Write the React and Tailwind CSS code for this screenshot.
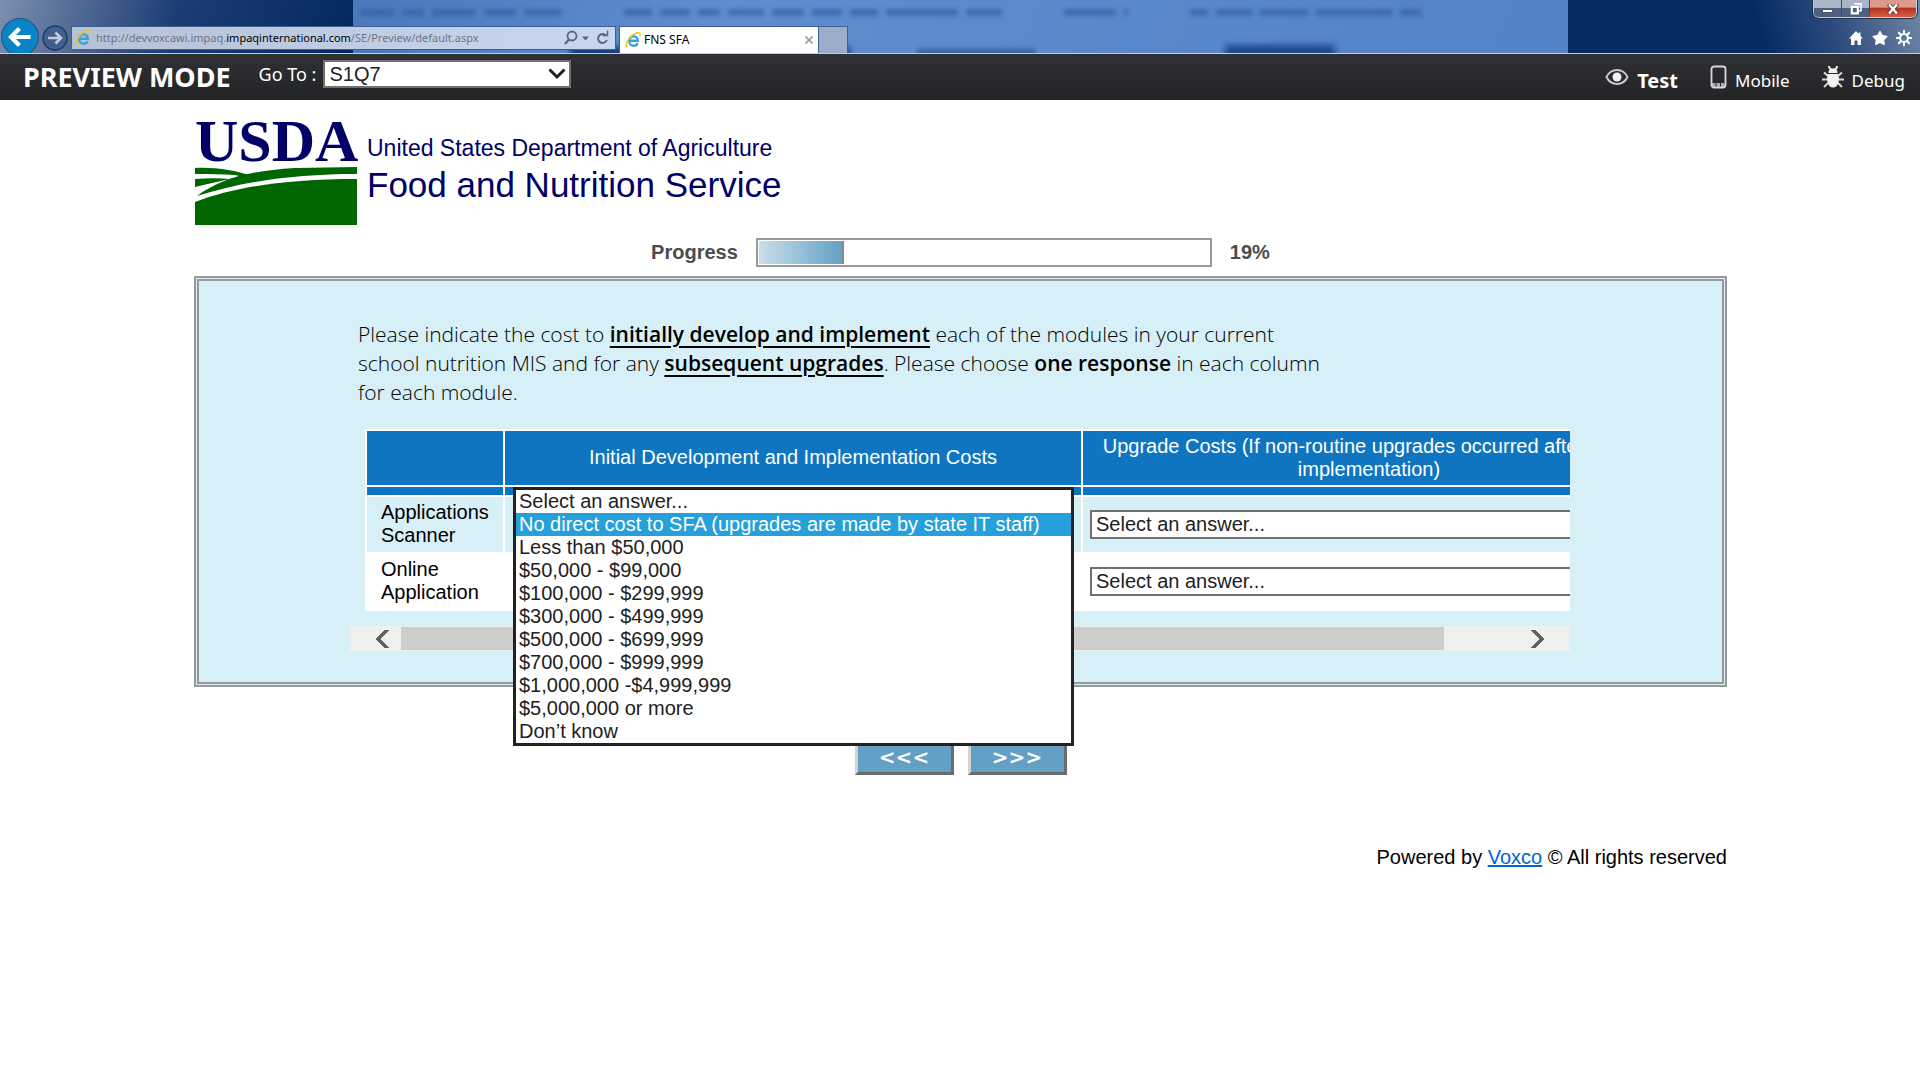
import React, { useState } from 'react';
import { FaStar } from 'react-icons/fa';

const COSTS = [
  'Select an answer...',
  'No direct cost to SFA (upgrades are made by state IT staff)',
  'Less than $50,000',
  '$50,000 - $99,000',
  '$100,000 - $299,999',
  '$300,000 - $499,999',
  '$500,000 - $699,999',
  '$700,000 - $999,999',
  '$1,000,000 -$4,999,999',
  '$5,000,000 or more',
  'Don’t know',
];

const MODULES = [
  { id: 'scanner', label: 'Applications Scanner' },
  { id: 'online', label: 'Online Application' },
];

// widths of the blurred words behind the title bar, one list per group
const BLURRED_WORDS = [
  [34, 22, 44, 32, 38],
  [28, 30, 22, 36, 32, 30, 28, 72, 36],
  [52, 4],
  [18, 36, 48, 76, 22],
];

const IeIcon = () => (
  <svg viewBox="0 0 16 16" className="h-4 w-4 shrink-0" fill="none" aria-hidden="true">
    <path d="M4.500 8.800h8.300C12.800 6 11 4.200 8.600 4.200S4.200 6.200 4.200 9s1.900 4.700 4.500 4.700c1.900 0 3.400-1 4-2.500" stroke="#3ba3dc" strokeWidth="2.400" />
    <path d="M2.300 15.200C.2 14.200 1.200 10.300 4.400 6.300 7.700 2.200 12.500-.3 14.500 1.100c.9.700.8 2 .2 3.300" stroke="#f2c21a" strokeWidth="1.400" />
  </svg>
);

const HomeIcon = () => (
  <svg viewBox="0 0 16 16" className="h-4 w-4" aria-hidden="true">
    <path d="M8 1L1 8.500h2V15h3.500v-4.500h3V15H13V8.500h2L12.500 6V2.500h-2V4z" fill="#fff" />
  </svg>
);

const GearIcon = () => (
  <svg viewBox="0 0 16 16" className="h-4 w-4" fill="none" stroke="#fff" aria-hidden="true">
    <circle cx="8" cy="8" r="4" strokeWidth="2.200" />
    <path d="M8 0v3.500M8 12.500V16M0 8h3.500M12.500 8H16M2.300 2.300l2.500 2.500M11.200 11.200l2.500 2.500M2.300 13.700l2.500-2.500M11.200 4.800l2.500-2.500" strokeWidth="2" />
  </svg>
);

const EyeIcon = () => (
  <svg viewBox="0 0 24 18" className="h-[18px] w-6" aria-hidden="true">
    <path d="M1.500 9C4 3.800 7.600 2 12 2s8 1.800 10.500 7C20 14.200 16.400 16 12 16S4 14.200 1.500 9z" fill="none" stroke="#c9c9c9" strokeWidth="2" />
    <circle cx="12" cy="9" r="4.500" fill="#f2f2f2" />
  </svg>
);

const PhoneIcon = () => (
  <svg viewBox="0 0 17 24" className="h-6 w-[17px]" aria-hidden="true">
    <rect x="1.500" y="1.500" width="14" height="21" rx="2.500" fill="none" stroke="#d8d8d8" strokeWidth="1.800" />
    <path d="M2 19h13M2 21h13" stroke="#d8d8d8" strokeWidth="1.500" strokeDasharray="3.500 1" />
  </svg>
);

const BugIcon = () => (
  <svg viewBox="0 0 22 24" className="h-6 w-[22px]" aria-hidden="true">
    <path d="M7 1c0 3 1.500 3.500 4 3.500S15 4 15 1" fill="none" stroke="#e8e8e8" strokeWidth="2" />
    <path d="M6.500 8C6.500 4.500 8 4 11 4s4.500.5 4.500 4z" fill="#f2f2f2" />
    <path d="M5.500 9h11c1.500 7-.5 13.500-5.500 13.500S4 16 5.500 9z" fill="#f2f2f2" />
    <path d="M6 11L2 7.500M5 14.500H0M6 18l-4 4M16 11l4-3.500M17 14.500h5M16 18l4 4" stroke="#d8d8d8" strokeWidth="2" />
  </svg>
);

/* Desktop content showing through the glass title bar */
const GlassBackdrop = () => (
  <div className="absolute inset-0 overflow-hidden bg-[#173c74]" aria-hidden="true">
    <div className="absolute inset-y-0 left-0 w-[360px] bg-linear-[105deg] from-[#7c8fb0] from-0% via-[#1c3d74] via-48% to-[#02275f]" />
    <div className="absolute inset-y-0 right-0 w-[360px] bg-linear-[75deg] from-[#042b64] from-55% via-[#2c4b7c] via-75% to-[#7187a4]" />
    <div className="absolute inset-y-0 left-[353px] right-[352px] bg-linear-[115deg] from-[#4a78bb] via-[#5f8dcf] via-30% to-[#5482c7]" />
    <div className="absolute left-[360px] top-[9px] flex h-[7px] gap-[62px] blur-[2px]">
      {BLURRED_WORDS.map((words, i) => (
        <div key={i} className="flex gap-2">
          {words.map((width, j) => (
            <span key={j} className="bg-[#2f5ba2]/60" style={{ width }} />
          ))}
        </div>
      ))}
    </div>
    <div className="absolute left-[570px] top-[47px] h-3 w-[280px] bg-[#143a74] blur-[3px]" />
    <div className="absolute left-[917px] top-[49px] h-2 w-[118px] bg-[#2f5288]/70 blur-[2px]" />
    <div className="absolute left-[1225px] top-[45px] h-4 w-[110px] bg-[#1d488c] blur-[3px]" />
  </div>
);

const BrowserChrome = () => (
  <div className="relative h-[54px] border-b border-[#b9cdec] font-['Noto_Sans']">
    <GlassBackdrop />
    <div className="relative flex h-[53px] items-end overflow-hidden">
      <button aria-label="Back" className="-mb-[3px] ml-px h-[38px] w-[38px] shrink-0">
        <svg viewBox="0 0 36 36" className="h-[38px] w-[38px]">
          <circle cx="18" cy="18" r="17.500" fill="#0a84c6" stroke="#26507f" />
          <path d="M28 18H10M17.500 10L9.500 18l8 8" fill="none" stroke="#fff" strokeWidth="4" />
        </svg>
      </button>
      <button aria-label="Forward" className="mb-[2px] ml-[3px] h-[26px] w-[26px] shrink-0">
        <svg viewBox="0 0 26 26" className="h-[26px] w-[26px]">
          <circle cx="13" cy="13" r="12" fill="#42608c" stroke="#1d3a68" strokeWidth="1.500" />
          <path d="M6 13h12M13.500 7.500L19 13l-5.500 5.500" fill="none" stroke="#c3cde0" strokeWidth="2.500" />
        </svg>
      </button>
      <div className="mb-[3px] ml-[3px] flex h-6 w-[545px] shrink-0 items-center border border-[#3d5f92] bg-linear-to-r from-[#b5c1d6] to-[#c8d7f0] pl-[3px] pr-1 text-[11px] text-[#6c7583]">
        <IeIcon />
        <span className="ml-[5px] flex-1 whitespace-nowrap">
          http://devvoxcawi.impaq.<span className="text-black">impaqinternational.com</span>/SE/Preview/default.aspx
        </span>
        <svg viewBox="0 0 48 18" className="h-[18px] w-12" fill="none" stroke="#5b6577" aria-hidden="true">
          <circle cx="9" cy="7" r="4.500" strokeWidth="1.800" />
          <path d="M6 10.500L2 15" strokeWidth="2.200" />
          <path d="M19 7.500h7l-3.500 4z" fill="#5b6577" stroke="none" />
          <path d="M43 6.500a4.500 4.500 0 1 0 .8 4.500" strokeWidth="2" />
          <path d="M39.500 6.500h5v-5" strokeWidth="1.500" />
        </svg>
      </div>
      <div className="ml-[3px] flex h-[27px] w-[200px] shrink-0 items-center border border-b-0 border-[#3d5f92] bg-white px-[5px] text-xs text-black">
        <IeIcon />
        <span className="ml-[3px] flex-1">FNS SFA</span>
        <button aria-label="Close tab" className="h-2 w-2">
          <svg viewBox="0 0 8 8" className="h-2 w-2"><path d="M.5.5l7 7M7.500.5l-7 7" stroke="#a0a0a0" strokeWidth="1.800" /></svg>
        </button>
      </div>
      <button aria-label="New tab" className="h-[27px] w-[29px] shrink-0 border border-b-0 border-l-0 border-[#3d5f92] bg-[#9dadc9]" />
      <div className="ml-auto flex h-full flex-col items-end justify-between pb-[7px]">
        <div className="mr-[3px] flex h-[18px] overflow-hidden rounded-b-md border border-t-0 border-[#e1e8f2]/80 outline outline-[#26344d]">
          <button aria-label="Minimize" className="flex w-7 items-center justify-center border-r border-[#3c4c66] bg-linear-to-b from-[#a8b5c8] from-45% to-[#4c6080] to-50%">
            <span className="mt-1 h-1 w-[11px] border border-[#4b566b] bg-white" />
          </button>
          <button aria-label="Restore" className="flex w-7 items-center justify-center border-r border-[#3c4c66] bg-linear-to-b from-[#a8b5c8] from-45% to-[#4c6080] to-50%">
            <svg viewBox="0 0 12 12" className="h-3 w-3"><path d="M4 .8h7v7H9" fill="none" stroke="#fff" strokeWidth="1.500" /><path d="M1.800 3.800h6v6.500h-6z" fill="none" stroke="#fff" strokeWidth="2.200" /></svg>
          </button>
          <button aria-label="Close" className="flex w-[46px] items-center justify-center bg-linear-to-b from-[#dd9a8c] from-40% via-[#b73322] via-50% to-[#d2603e]">
            <svg viewBox="0 0 12 10" className="h-[10px] w-3"><path d="M1.500 0l9 10M10.500 0l-9 10" stroke="#5c2a2a" strokeWidth="4" /><path d="M2 .5l8 9M10 .5l-8 9" stroke="#fff" strokeWidth="2.500" /></svg>
          </button>
        </div>
        <div className="mr-2 flex gap-2 text-white">
          <button aria-label="Home"><HomeIcon /></button>
          <button aria-label="Favorites"><FaStar size={16} /></button>
          <button aria-label="Tools"><GearIcon /></button>
        </div>
      </div>
    </div>
  </div>
);

const PreviewBar = () => (
  <header className="flex h-[46px] items-center bg-linear-to-b from-[#303135] to-[#222325] pl-[23px] pr-[15px] font-['Noto_Sans'] text-lg text-white">
    <h1 className="text-[27px] font-bold">PREVIEW MODE</h1>
    <div className="mb-[6px] ml-7 flex items-center gap-[7px]">
      <label htmlFor="goto">Go To :</label>
      <div className="relative">
        <select id="goto" className="block h-7 w-[248px] appearance-none border-2 border-[#707070] bg-white px-1 font-['Liberation_Sans'] text-xl leading-6 text-[#212121]">
          <option>S1Q7</option>
        </select>
        <svg viewBox="0 0 18 12" className="pointer-events-none absolute right-[5px] top-2 h-3 w-[18px]" aria-hidden="true">
          <path d="M1.500 1.500L9 9l7.500-7.500" fill="none" stroke="#212121" strokeWidth="3" />
        </svg>
      </div>
    </div>
    <nav className="ml-auto flex items-center gap-8 text-[17px]">
      <a href="#test" className="flex items-center gap-2 text-xl font-bold"><EyeIcon /><span className="mt-2">Test</span></a>
      <a href="#mobile" className="flex items-center gap-2"><PhoneIcon /><span className="mt-2">Mobile</span></a>
      <a href="#debug" className="flex items-center gap-2"><BugIcon /><span className="mt-2">Debug</span></a>
    </nav>
  </header>
);

const AgencyLogo = () => (
  <div className="ml-px flex h-[128px] pt-3 text-[#000066]">
    <div className="w-[163px]">
      <div className="h-[55px] font-['Liberation_Serif'] text-[60px] font-bold leading-[58px]">USDA</div>
      <svg viewBox="0 0 162 58" className="h-[58px] w-[162px]" aria-hidden="true">
        <path d="M0 1C20 0 40 3 56 9 48 10 44 9 40 8 28 7 14 7 0 7zM0 12c12-1 24-1 35 0-12 3-24 5-35 8z" fill="#006600" />
        <path d="M2 29C24 13 50 4 100 1L162 0v7C100 7 50 14 2 29z" fill="#006600" />
        <path d="M0 35C40 20 90 12 162 12v46H0z" fill="#006600" />
      </svg>
    </div>
    <div className="ml-[9px] pt-[21px]">
      <p className="text-[23px] leading-[30px]">United States Department of Agriculture</p>
      <p className="mt-[3px] text-[35px] leading-[38px]">Food and Nutrition Service</p>
    </div>
  </div>
);

const Progress = ({ value }) => (
  <div className="flex h-[48px] items-center justify-center gap-[18px] text-xl font-bold text-[#4c4c4c]">
    <span id="progress-label">Progress</span>
    <div role="progressbar" aria-labelledby="progress-label" aria-valuenow={value} className="h-[29px] w-[456px] border-2 border-[#999] p-px">
      <div className="h-full border-r-2 border-[#8a8a8a] bg-linear-to-r from-[#cadfea] to-[#64a0c6]" style={{ width: `${value}%` }} />
    </div>
    <span>{value}%</span>
  </div>
);

const CostSelect = ({ id, label }) => (
  <select id={id} aria-label={label} className="block h-[29px] w-full appearance-none border-2 border-[#707070] bg-white px-1 text-xl leading-6 text-[#212121]">
    {COSTS.map((cost) => <option key={cost}>{cost}</option>)}
  </select>
);

const CostTable = () => (
  <table className="ml-[15px] w-[1292px] table-fixed border-separate border-spacing-[2px] bg-white text-xl leading-[23px] text-black">
    <colgroup>
      <col className="w-[136px]" />
      <col className="w-[576px]" />
      <col className="w-[572px]" />
    </colgroup>
    <thead className="text-white">
      <tr className="h-[54px] bg-[#0f75c1]">
        <td />
        <th className="pb-[2px] font-normal">Initial Development and Implementation Costs</th>
        <th className="px-4 font-normal">Upgrade Costs (If non-routine upgrades occurred after initial implementation)</th>
      </tr>
      <tr className="h-2 bg-[#0f75c1]">
        <td className="p-0" />
        <td className="p-0" />
        <td className="p-0" />
      </tr>
    </thead>
    <tbody>
      {MODULES.map((item) => (
        <tr key={item.id} className="h-[55px] odd:bg-[#d7eff6]">
          <th scope="row" className="pb-px pl-[14px] pt-0 text-left font-normal">{item.label}</th>
          <td className="px-2 pb-px pt-0"><CostSelect id={`${item.id}-initial`} label={`${item.label}, initial costs`} /></td>
          <td className="px-[7px] pb-px pt-0"><CostSelect id={`${item.id}-upgrade`} label={`${item.label}, upgrade costs`} /></td>
        </tr>
      ))}
    </tbody>
  </table>
);

const ScrollBar = () => (
  <div className="mt-[15px] flex h-[25px] items-center bg-[#efefef]">
    <button aria-label="Scroll left" className="flex w-[51px] justify-end pr-[11px]">
      <svg viewBox="0 0 14 18" className="h-[18px] w-[14px]"><path d="M13 0L4 9l9 9H9L0 9l9-9z" fill="#606060" stroke="#606060" /></svg>
    </button>
    <div className="h-[23px] flex-1 bg-[#cdcdcd]" />
    <button aria-label="Scroll right" className="flex w-[126px] justify-end pr-[26px]">
      <svg viewBox="0 0 14 18" className="h-[18px] w-[14px]"><path d="M1 0l9 9-9 9h4l9-9-9-9z" fill="#606060" stroke="#606060" /></svg>
    </button>
  </div>
);

const CostMenu = ({ active, setActive }) => (
  <ul role="listbox" aria-label="Initial costs" className="absolute left-[163px] top-[58px] z-10 w-[561px] border-[3px] border-[#222] bg-white text-xl leading-[23px] text-[#212121]">
    {COSTS.map((cost, i) => (
      <li
        key={cost}
        role="option"
        aria-selected={i === active}
        onMouseEnter={() => setActive(i)}
        className={`h-[23px] whitespace-nowrap pl-[3px] ${i === active ? 'bg-[#26a0da] text-white' : ''}`}
      >
        {cost}
      </li>
    ))}
  </ul>
);

const NavButton = ({ label, children }) => (
  <button aria-label={label} className="h-9 w-[99px] border-[3px] border-b-[#6b6b6b] border-l-[#d3d3d3] border-r-[#6b6b6b] border-t-[#d3d3d3] bg-[#64a0c6] font-['DejaVu_Sans'] text-xl font-bold leading-6 text-white">
    {children}
  </button>
);

const App = () => {
  const [active, setActive] = useState(1);

  return (
    <div className="min-h-screen bg-white font-['Liberation_Sans',sans-serif] text-black">
      <BrowserChrome />
      <PreviewBar />
      <main className="pl-[194px] pr-[193px]">
        <AgencyLogo />
        <Progress value={19} />
        <section className="border-[5px] border-double border-[#999] bg-[#d7eff6] pb-[31px] pl-[151px] pr-[152px] pt-[39px]">
          <p className="ml-2 font-['Open_Sans'] text-[21px] font-light leading-[29px]">
            Please indicate the cost to <b className="font-semibold underline underline-offset-4">initially develop and implement</b> each of the modules in your current
            <br />
            school nutrition MIS and for any <b className="font-semibold underline underline-offset-4">subsequent upgrades</b>. Please choose <b className="font-semibold">one response</b> in each column
            <br />
            for each module.
          </p>
          <div className="relative mt-[22px]">
            <div className="overflow-hidden">
              <CostTable />
              <ScrollBar />
            </div>
            <CostMenu active={active} setActive={setActive} />
          </div>
        </section>
        <div className="mt-[52px] flex justify-center gap-[14px]">
          <NavButton label="Previous">&lt;&lt;&lt;</NavButton>
          <NavButton label="Next">&gt;&gt;&gt;</NavButton>
        </div>
        <footer className="mt-[70px] text-right text-xl leading-6">
          Powered by <a href="#voxco" className="text-[#0066cc] underline">Voxco</a> © All rights reserved
        </footer>
      </main>
    </div>
  );
};

export default App;
